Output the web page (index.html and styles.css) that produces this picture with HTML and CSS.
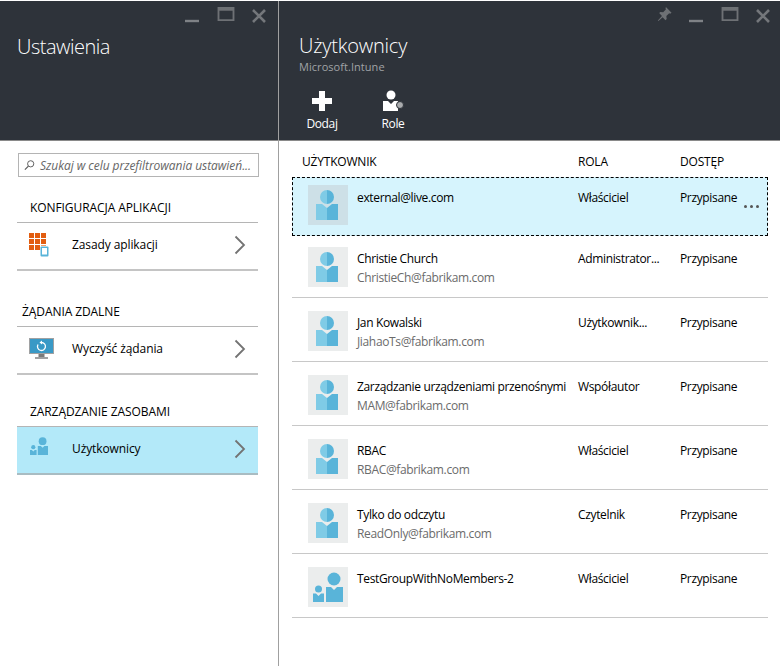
FILE: index.html
```html
<!DOCTYPE html>
<html lang="pl">
<head>
<meta charset="utf-8">
<title>Użytkownicy</title>
<link rel="stylesheet" href="styles.css">
</head>
<body>
<svg class="defs" width="0" height="0">
  <defs>
    <symbol id="user" viewBox="0 0 40 40">
      <path d="M19 5a7 7 0 0 1 0 14z" fill="#59b4d9"/>
      <path d="M19 5a7 7 0 0 0 0 14z" fill="#7fcbe6"/>
      <path d="M8 19h6l5 4v12H8z" fill="#7fcbe6"/>
      <path d="M30 19h-6l-5 4v12h11z" fill="#59b4d9"/>
    </symbol>
    <symbol id="group" viewBox="0 0 40 40">
      <circle cx="26" cy="12" r="6.500" fill="#59b4d9"/>
      <path d="M18 20h5l3 3 3-3h6v15H18z" fill="#59b4d9"/>
      <circle cx="10.500" cy="22" r="3.500" fill="#59b4d9"/>
      <path d="M5 26.500h3l2.500 2.500 2.500-2.500h3V35H5z" fill="#59b4d9"/>
    </symbol>
    <symbol id="chev" viewBox="0 0 12 20">
      <path d="M1.500 1.500 10 10l-8.500 8.500" fill="none" stroke="#737373" stroke-width="1.800"/>
    </symbol>
    <symbol id="min" viewBox="0 0 16 16"><path d="M1 14h14" stroke="#7f8286" stroke-width="2.400"/></symbol>
    <symbol id="max" viewBox="0 0 18 16"><path d="M1 1h16v13H1z" fill="none" stroke="#6e7175" stroke-width="2"/><path d="M1 3h16" stroke="#6e7175" stroke-width="2"/></symbol>
    <symbol id="close" viewBox="0 0 14 14"><path d="m1 1 12 12M13 1 1 13" stroke="#74777b" stroke-width="2.600"/></symbol>
  </defs>
</svg>
<div class="page">
  <section class="blade blade-left">
    <header class="head">
      <div class="controls">
        <svg class="ctl-min"><use href="#min"/></svg>
        <svg class="ctl-max"><use href="#max"/></svg>
        <svg class="ctl-close"><use href="#close"/></svg>
      </div>
      <h1 class="title title-left">Ustawienia</h1>
    </header>
    <div class="settings">
      <div class="search">
        <svg class="search-icon" viewBox="0 0 12 12"><circle cx="7.300" cy="4.700" r="3.400" fill="none" stroke="#555" stroke-width="1"/><path d="M4.800 7.200 1 11" stroke="#555" stroke-width="1.200"/></svg>
        <span class="search-text">Szukaj w celu przefiltrowania ustawień...</span>
      </div>

      <h2 class="group-title gt-first">KONFIGURACJA APLIKACJI</h2>
      <div class="menu-row">
        <svg class="menu-icon" viewBox="0 0 26 24">
          <path fill="#e25d10" d="M0 0h5v5H0zM6 0h5v5H6zM12 0h5v5h-5zM0 6h5v5H0zM6 6h5v5H6zM12 6h5v5h-5zM0 12h5v5H0zM6 12h5v5H6z"/>
          <path fill="#f0a06b" d="M12 12h5v1h-5z"/>
          <rect x="11.500" y="13.500" width="8" height="10" rx="1" fill="#59b4d9"/>
          <rect x="13" y="15" width="5" height="6.500" fill="#fff"/>
        </svg>
        <span class="menu-label">Zasady aplikacji</span>
        <svg class="chev"><use href="#chev"/></svg>
      </div>

      <h2 class="group-title gt-second">ŻĄDANIA ZDALNE</h2>
      <div class="menu-row">
        <svg class="menu-icon" viewBox="0 0 26 24">
          <rect x="0" y="1" width="25" height="16" fill="#a0a1a2"/>
          <rect x="1" y="2" width="23" height="14" fill="#3999c6"/>
          <rect x="9.500" y="17" width="6" height="3" fill="#7a7a7a"/>
          <rect x="6" y="20" width="13" height="2" fill="#a0a1a2"/>
          <path d="M9 7.500a4 4 0 1 0 3.500-2" fill="none" stroke="#fff" stroke-width="1.300"/>
          <path d="m13 3.500-2.500 2 2.500 2z" fill="#fff"/>
        </svg>
        <span class="menu-label">Wyczyść żądania</span>
        <svg class="chev"><use href="#chev"/></svg>
      </div>

      <h2 class="group-title gt-third">ZARZĄDZANIE ZASOBAMI</h2>
      <div class="menu-row is-active">
        <svg class="menu-icon" viewBox="4 4 34 32"><use href="#group"/></svg>
        <span class="menu-label">Użytkownicy</span>
        <svg class="chev"><use href="#chev"/></svg>
      </div>
    </div>
  </section>

  <section class="blade blade-right">
    <header class="head">
      <div class="controls">
        <svg class="ctl-pin" viewBox="0 0 16 16"><path d="m9.500 0 6 6-1.500 1.200-1-.5-3 3 .3 3-1.300 1.300-3-3L1.500 15l-.6-.6L5.300 9.500l-3-3 1.300-1.300 3 .3 3-3-.5-1z" fill="#6e7175"/></svg>
        <svg class="ctl-min"><use href="#min"/></svg>
        <svg class="ctl-max"><use href="#max"/></svg>
        <svg class="ctl-close"><use href="#close"/></svg>
      </div>
      <h1 class="title title-right">Użytkownicy</h1>
      <div class="subtitle">Microsoft.Intune</div>
      <div class="commands">
        <div class="command cmd-add">
          <svg class="cmd-icon" viewBox="0 0 22 22"><path d="M8 1h6v7h7v6h-7v7H8v-7H1V8h7z" fill="#fff"/></svg>
          <span>Dodaj</span>
        </div>
        <div class="command cmd-role">
          <svg class="cmd-icon" viewBox="0 0 24 22"><circle cx="10" cy="5" r="4.500" fill="#fff"/><path d="M2 11h5l3 3 3-3h4v10H2z" fill="#fff"/><circle cx="19" cy="15" r="3.500" fill="#a9abad" stroke="#2e333a" stroke-width="1"/></svg>
          <span>Role</span>
        </div>
      </div>
    </header>
    <div class="users">
      <div class="cols cols-head">
        <div class="c-user">UŻYTKOWNIK</div>
        <div class="c-role">ROLA</div>
        <div class="c-access">DOSTĘP</div>
      </div>

      <div class="cols user-row is-selected">
        <div class="avatar"><svg><use href="#user"/></svg></div>
        <div class="c-name"><div class="name">external@live.com</div></div>
        <div class="c-role cell">Właściciel</div>
        <div class="c-access cell">Przypisane</div>
        <div class="more"><i></i><i></i><i></i></div>
      </div>

      <div class="cols user-row">
        <div class="avatar"><svg><use href="#user"/></svg></div>
        <div class="c-name"><div class="name">Christie Church</div><div class="mail">ChristieCh@fabrikam.com</div></div>
        <div class="c-role cell">Administrator...</div>
        <div class="c-access cell">Przypisane</div>
      </div>

      <div class="cols user-row">
        <div class="avatar"><svg><use href="#user"/></svg></div>
        <div class="c-name"><div class="name">Jan Kowalski</div><div class="mail">JiahaoTs@fabrikam.com</div></div>
        <div class="c-role cell">Użytkownik...</div>
        <div class="c-access cell">Przypisane</div>
      </div>

      <div class="cols user-row">
        <div class="avatar"><svg><use href="#user"/></svg></div>
        <div class="c-name"><div class="name">Zarządzanie urządzeniami przenośnymi</div><div class="mail">MAM@fabrikam.com</div></div>
        <div class="c-role cell">Współautor</div>
        <div class="c-access cell">Przypisane</div>
      </div>

      <div class="cols user-row">
        <div class="avatar"><svg><use href="#user"/></svg></div>
        <div class="c-name"><div class="name">RBAC</div><div class="mail">RBAC@fabrikam.com</div></div>
        <div class="c-role cell">Właściciel</div>
        <div class="c-access cell">Przypisane</div>
      </div>

      <div class="cols user-row">
        <div class="avatar"><svg><use href="#user"/></svg></div>
        <div class="c-name"><div class="name">Tylko do odczytu</div><div class="mail">ReadOnly@fabrikam.com</div></div>
        <div class="c-role cell">Czytelnik</div>
        <div class="c-access cell">Przypisane</div>
      </div>

      <div class="cols user-row">
        <div class="avatar"><svg><use href="#group"/></svg></div>
        <div class="c-name"><div class="name">TestGroupWithNoMembers-2</div></div>
        <div class="c-role cell">Właściciel</div>
        <div class="c-access cell">Przypisane</div>
      </div>
    </div>
  </section>
</div>
</body>
</html>
```

FILE: styles.css
```css
* { box-sizing: border-box; }
html, body { margin: 0; padding: 0; background: #fff; }
body {
  width: 782px;
  height: 666px;
  overflow: hidden;
  font-family: "Open Sans", "Noto Sans", sans-serif;
  font-size: 12px;
  letter-spacing: -0.35px;
  color: #000;
}
.defs { position: absolute; }
.page { display: flex; height: 666px; padding: 1px 2px 0 0; }
.blade { display: flex; flex-direction: column; }
.blade-left { width: 279px; border-right: 1px solid #a0a0a0; }
.blade-right { flex: 1; min-width: 0; }
.head {
  position: relative;
  height: 140px;
  flex: none;
  background: #2e333a;
  border-bottom: 1px solid #8a8a8a;
  color: #fff;
  padding-left: 17px;
}
.blade-right .head { padding-left: 20px; }
.controls {
  position: absolute;
  top: 6px;
  right: 12px;
  display: flex;
  align-items: flex-start;
}
.blade-right .controls { right: 10px; }
.controls svg { display: block; flex: none; }
.ctl-pin { width: 15px; height: 15px; margin-right: 16px; }
.ctl-min { width: 16px; height: 16px; margin-right: 17px; }
.ctl-max { width: 18px; height: 15px; margin-right: 17px; }
.ctl-close { width: 14px; height: 14px; margin-top: 2px; }
.title {
  margin: 0;
  font-weight: 300;
  font-size: 20px;
  line-height: 26px;
  letter-spacing: -0.5px;
  padding-top: 33px;
}
.title-right { letter-spacing: -0.2px; padding-top: 32px; }
.subtitle { font-size: 11px; line-height: 15px; color: #a0a3a6; letter-spacing: 0.05px; }
.commands { display: flex; margin-top: 16px; margin-left: 7px; }
.command { display: flex; flex-direction: column; align-items: center; width: 32px; font-size: 12px; line-height: 16px; }
.cmd-role { margin-left: 43px; width: 24px; }
.cmd-icon { width: 22px; height: 22px; display: block; margin-bottom: 4px; }
.cmd-role .cmd-icon { width: 24px; }

.settings { padding: 12px 20px 0 17px; }
.search {
  display: flex;
  align-items: center;
  height: 24px;
  margin-left: 1px;
  margin-right: -1px;
  border: 1px solid #b4b4b4;
  padding-left: 5px;
  color: #666;
  font-style: italic;
  font-size: 12px;
  letter-spacing: -0.05px;
  white-space: nowrap;
  overflow: hidden;
}
.search-icon { width: 11px; height: 12px; margin-right: 5px; flex: none; }
.group-title {
  margin: 0;
  font-weight: 400;
  font-size: 12px;
  line-height: 16px;
  letter-spacing: -0.08px;
  padding-bottom: 6px;
  border-bottom: 1px solid #b5b5b5;
  white-space: nowrap;
}
.gt-first { padding-left: 13px; margin-top: 23px; }
.gt-second { padding-left: 5px; margin-top: 33px; }
.gt-third { padding-left: 13px; margin-top: 29px; }
.menu-row {
  display: flex;
  align-items: center;
  height: 48px;
  border-bottom: 2px solid #c4c4c4;
  padding: 0 12px 3px;
}
.menu-row.is-active { background: #b3e9f9; border-bottom-color: #a9bcc2; }
.menu-icon { width: 26px; height: 24px; flex: none; margin-right: 17px; }
.menu-label { flex: 1; font-size: 12px; letter-spacing: -0.1px; }
.chev { width: 12px; height: 20px; flex: none; }

.users { padding: 0 12px 0 13px; }
.cols { display: flex; }
.cols-head {
  height: 36px;
  align-items: flex-end;
  font-size: 12px;
  font-weight: 500;
  line-height: 16px;
  letter-spacing: -0.2px;
  padding: 0 0 7px 10px;
}
.cols-head .c-user { width: 276px; }
.cols-head .c-role { width: 102px; }
.user-row {
  position: relative;
  height: 64px;
  align-items: flex-start;
  padding: 13px 0 0 16px;
  border-bottom: 1px solid #c8c8c8;
}
.user-row .cell, .user-row .c-name { padding-top: 4px; }
.user-row.is-selected {
  height: 59px;
  margin-bottom: -2px;
  background: #d6f4fd;
  border: 1px dashed #000;
  padding: 7px 0 0 15px;
}
.user-row.is-selected .cell, .user-row.is-selected .c-name { padding-top: 5px; }
.avatar { width: 40px; height: 40px; background: #ebeded; flex: none; margin-right: 9px; }
.is-selected .avatar { background: #cde0e7; }
.avatar svg { width: 40px; height: 40px; display: block; }
.c-name { width: 221px; flex: none; white-space: nowrap; }
.name { line-height: 16px; }
.mail { line-height: 16px; margin-top: 3px; color: #6b6b6b; }
.user-row .c-role { width: 102px; flex: none; }
.cell { line-height: 16px; }
.more {
  position: absolute;
  right: 8px;
  top: 27px;
  display: flex;
  gap: 3px;
}
.more i { display: block; width: 3px; height: 3px; border-radius: 50%; background: #555; }
```
